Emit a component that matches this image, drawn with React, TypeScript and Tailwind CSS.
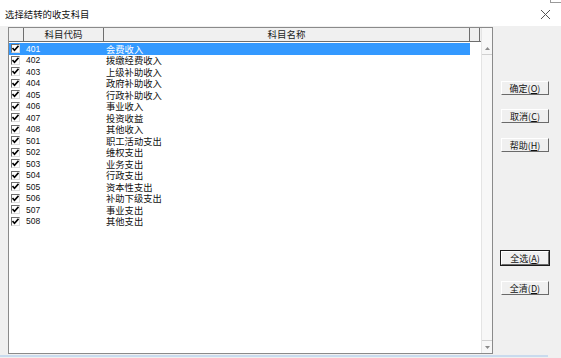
import React from 'react';

const rows: [string, string][] = [
  ['401', '会费收入'],
  ['402', '拨缴经费收入'],
  ['403', '上级补助收入'],
  ['404', '政府补助收入'],
  ['405', '行政补助收入'],
  ['406', '事业收入'],
  ['407', '投资收益'],
  ['408', '其他收入'],
  ['501', '职工活动支出'],
  ['502', '维权支出'],
  ['503', '业务支出'],
  ['504', '行政支出'],
  ['505', '资本性支出'],
  ['506', '补助下级支出'],
  ['507', '事业支出'],
  ['508', '其他支出'],
];

function Check() {
  return (
    <div className="w-[9px] h-[9px] bg-white border border-t-[#6f6f6f] border-l-[#6f6f6f] border-b-[#dcdcdc] border-r-[#dcdcdc] flex items-center justify-center">
      <svg width="7" height="7" viewBox="0 0 7 7">
        <path d="M0.5 3 L2.5 5.2 L6.5 0.8" fill="none" stroke="#000" strokeWidth="1.6" />
      </svg>
    </div>
  );
}

function Btn({ text, hot, focus }: { text: string; hot: string; focus?: boolean }) {
  return (
    <div
      className={
        'w-[50px] h-[16px] ' +
        (focus ? 'border border-[#1a1a1a]' : 'border border-transparent')
      }
    >
      <div className="w-full h-full bg-[#f0f0f0] border border-t-white border-l-white border-b-[#6a6a6a] border-r-[#6a6a6a] flex items-center justify-center text-[9px] leading-none text-[#111]">
        {text}(<span className="underline">{hot}</span>)
      </div>
    </div>
  );
}

export default function App() {
  return (
    <div className="w-[561px] h-[358px] bg-white flex flex-col overflow-hidden relative font-['Noto_Sans_CJK_SC',sans-serif]">
      {/* window corner */}
      <div className="absolute left-[550px] top-0 w-[11px] h-[3px] border-l border-b border-[#9a9a9a]" />

      {/* title bar */}
      <div className="h-[26px] flex items-center justify-between pl-[5px] pr-[10px] shrink-0">
        <span className="text-[9.4px] leading-none text-[#111] pt-[4px]">选择结转的收支科目</span>
        <svg width="11" height="11" viewBox="0 0 11 11" className="mt-[3px]">
          <path d="M1 1 L10 10 M10 1 L1 10" stroke="#555" strokeWidth="1" />
        </svg>
      </div>

      {/* body */}
      <div className="flex-1 bg-[#f0f0f0] flex pl-[8px] pt-[1px]">
        {/* grid */}
        <div className="w-[485px] h-[327px] bg-white border border-[#8a8a8a] flex">
          <div className="w-[472px] flex flex-col">
            {/* header */}
            <div className="h-[14px] flex bg-[#f0f0f0] border-b border-[#6e6e6e] text-[9.5px] leading-none text-[#222]">
              <div className="w-[15px] border-r border-[#6e6e6e]" />
              <div className="w-[80px] border-r border-[#6e6e6e] flex items-center justify-center">科目代码</div>
              <div className="w-[366px] border-r border-[#6e6e6e] flex items-center justify-center">科目名称</div>
              <div className="w-[10px] border-r border-[#6e6e6e]" />
            </div>
            {/* rows */}
            <div className="flex flex-col w-[461px] pt-[1px]">
              {rows.map(([code, name], i) => (
                <div
                  key={code}
                  className={
                    'h-[11.5px] flex items-center overflow-hidden ' +
                    (i === 0 ? 'bg-[#3399ff] text-white' : 'text-[#111]')
                  }
                >
                  <div className="w-[15px] pl-[2px] flex items-center">
                    <Check />
                  </div>
                  <div className="w-[80px] pl-[2px] text-[8.5px] leading-[10px] font-['Liberation_Sans',sans-serif]">
                    {code}
                  </div>
                  <div className="flex-1 pl-[2px] text-[9.3px] leading-[10px]">{name}</div>
                </div>
              ))}
            </div>
          </div>
          {/* scrollbar */}
          <div className="flex-1 flex flex-col bg-[#f7f7f7] border-l border-[#e4e4e4]">
            <div className="h-[14px]" />
            <div className="h-[13px] flex items-center justify-center border-b border-[#d0d0d0]">
              <svg width="5" height="3" viewBox="0 0 5 3">
                <path d="M0 3 L2.5 0 L5 3 Z" fill="#8a8a8a" />
              </svg>
            </div>
            <div className="flex-1" />
            <div className="h-[13px] flex items-center justify-center border-t border-[#d0d0d0]">
              <svg width="5" height="3" viewBox="0 0 5 3">
                <path d="M0 0 L2.5 3 L5 0 Z" fill="#8a8a8a" />
              </svg>
            </div>
          </div>
        </div>

        {/* buttons */}
        <div className="flex-1 flex flex-col pl-[7px] pt-[53px]">
          <Btn text="确定" hot="O" />
          <div className="mt-[12px]">
            <Btn text="取消" hot="C" />
          </div>
          <div className="mt-[13px]">
            <Btn text="帮助" hot="H" />
          </div>
          <div className="mt-[97px]">
            <Btn text="全选" hot="A" focus />
          </div>
          <div className="mt-[14px]">
            <Btn text="全清" hot="D" />
          </div>
        </div>
      </div>

      {/* bottom edge */}
      <div className="h-[4px] bg-[#f0f0f0] flex flex-col shrink-0">
        <div className="h-[1px]" />
        <div className="h-[2px] w-[548px] bg-[#c9dbee]" />
      </div>
    </div>
  );
}
